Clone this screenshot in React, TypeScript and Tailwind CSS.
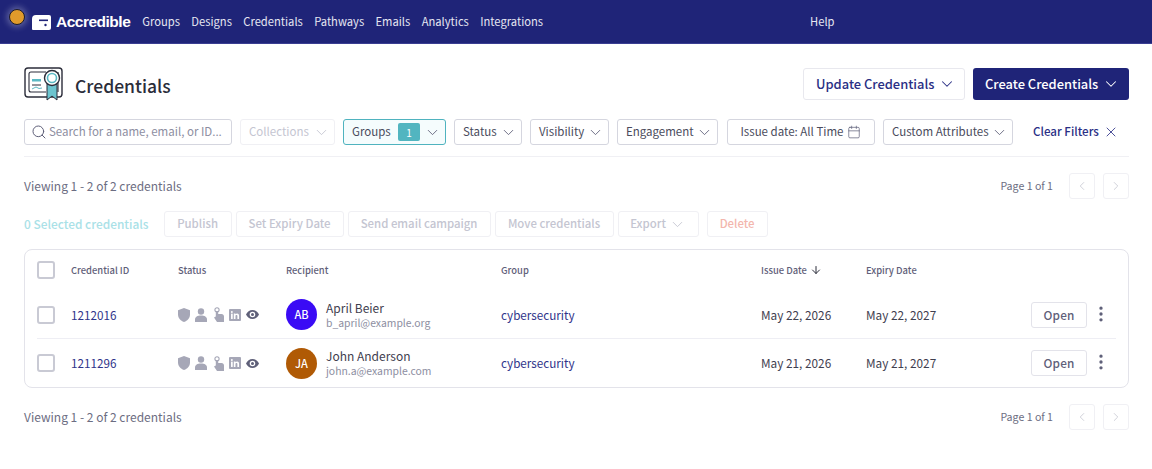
import React from "react";
import { ChevronDown, ChevronLeft, ChevronRight, Search, Calendar, X, ArrowDown, EllipsisVertical } from "lucide-react";

const font = "font-['Noto_Sans_CJK_SC','Noto_Sans',sans-serif]";

function Logo() {
  return (
    <svg width="19" height="15" viewBox="0 0 19 15" className="mt-[1px] shrink-0">
      <path d="M4 0H17a2 2 0 0 1 2 2v11a2 2 0 0 1-2 2H1a1 1 0 0 1-1-1V4a4 4 0 0 1 4-4z" fill="#fff" />
      <rect x="7" y="4.500" width="9" height="1.600" fill="#1f2478" />
      <circle cx="13.500" cy="10" r="1.200" fill="#1f2478" />
    </svg>
  );
}

function CertIcon() {
  return (
    <svg width="40" height="34" viewBox="0 0 40 34" fill="none" className="shrink-0">
      <rect x="1" y="1" width="37" height="29" rx="3" stroke="#2b2d3a" strokeWidth="1.400" />
      <path d="M22 5H7a2 2 0 0 0-2 2v16a2 2 0 0 0 2 2h15M34 5v20" stroke="#2b2d3a" strokeWidth="1.100" />
      <rect x="8" y="12" width="9" height="2.500" fill="#5ab9c4" />
      <path d="M8 18h9" stroke="#2b2d3a" strokeWidth="1" />
      <path d="M8 22l4-2 3 1.500 3-.5" stroke="#5ab9c4" strokeWidth="1" />
      <path d="M23 17v16l5-4 5 4V17z" fill="#6cc4cf" stroke="#2b2d3a" strokeWidth="1" />
      <circle cx="28" cy="11" r="7.500" fill="#fff" stroke="#2b2d3a" strokeWidth="1.400" />
      <circle cx="28" cy="11" r="4.500" fill="#fff" stroke="#5ab9c4" strokeWidth="1.600" />
    </svg>
  );
}

function StatusIcons() {
  const c = "#a6a7b7";
  return (
    <div className="flex w-[108px] items-center gap-[5px]">
      <svg width="12" height="14" viewBox="0 0 12 14" fill={c}><path d="M6 0 12 2.200v4.300c0 3.400-2.400 6.200-6 7.500C2.400 12.700 0 9.900 0 6.500V2.200z" /></svg>
      <svg width="12" height="14" viewBox="0 0 12 14" fill={c}><circle cx="6" cy="3.500" r="3.200" /><path d="M0 14v-2.500C0 9 2.400 7.500 6 7.500S12 9 12 11.500V14z" /></svg>
      <svg width="12" height="15" viewBox="0 0 12 15" fill={c}><circle cx="5" cy="2.800" r="2.100" fill="none" stroke={c} strokeWidth="1.100" /><path d="M3.800 4h2.400v3h3.300c1.500 0 2.500 1 2.500 2.500V15H5L2 10.500l1.800-1z" /></svg>
      <svg width="12" height="12" viewBox="0 0 13 13"><rect width="13" height="13" rx="1" fill={c} /><rect x="2.200" y="5" width="1.800" height="5.800" fill="#fff" /><circle cx="3.100" cy="3.200" r="1.050" fill="#fff" /><path d="M5.200 5H7v.8c.4-.6 1-1 1.800-1 1.500 0 2.100 1 2.100 2.500v3.500H9.100V7.700c0-.8-.3-1.300-1-1.300S7 7 7 7.700v3.100H5.200z" fill="#fff" /></svg>
      <svg width="13" height="9" viewBox="0 0 13 9" fill="#5f6079"><path d="M6.500 0C3.600 0 1.200 1.800 0 4.500 1.200 7.200 3.600 9 6.500 9S11.800 7.200 13 4.500C11.800 1.800 9.400 0 6.500 0zm0 7.300a2.800 2.800 0 1 1 0-5.600 2.800 2.800 0 0 1 0 5.600z" /><circle cx="6.500" cy="4.500" r="1.500" /></svg>
    </div>
  );
}

function Filter({ label, className = "" }: { label: string; className?: string }) {
  return (
    <div className={`flex h-[26px] items-center justify-between whitespace-nowrap rounded-[3px] border border-[#d5d6df] bg-white pl-2 pr-1 text-[11.500px] text-[#4a4b5c] ${className}`}>
      <span>{label}</span>
      <ChevronDown size={17} strokeWidth={1.250} className="shrink-0 text-[#5f6079]" />
    </div>
  );
}

function Bulk({ label, className = "" }: { label: string; className?: string }) {
  return (
    <div className={`flex h-[26px] items-center justify-center whitespace-nowrap rounded-[3px] border border-[#f0f0f4] text-[11.400px] font-medium text-[#c4c5d1] ${className}`}>
      {label}
    </div>
  );
}

function Pager({ className = "" }: { className?: string }) {
  return (
    <div className={`flex items-center justify-between ${className}`}>
      <span className="text-[12px] text-[#6c6d82]">Viewing 1 - 2 of 2 credentials</span>
      <div className="flex items-center">
        <span className="mr-4 text-[10.600px] text-[#6c6d82]">Page 1 of 1</span>
        <div className="mr-[8px] flex h-[26px] w-[26px] items-center justify-center rounded-[3px] border border-[#f0f0f4] text-[#c9cad4]"><ChevronLeft size={14} strokeWidth={1.500} /></div>
        <div className="flex h-[26px] w-[26px] items-center justify-center rounded-[3px] border border-[#f0f0f4] text-[#c9cad4]"><ChevronRight size={14} strokeWidth={1.500} /></div>
      </div>
    </div>
  );
}

function Row({ id, initials, color, name, email, date, exp, last }: { id: string; initials: string; color: string; name: string; email: string; date: string; exp: string; last?: boolean }) {
  return (
    <div className={`mx-3 flex h-[48px] items-center ${last ? "" : "border-b border-[#eeeef4]"}`}>
      <div className="h-[18px] w-[18px] shrink-0 rounded-[3px] border-2 border-[#c9cad4] bg-white" />
      <div className="ml-4 w-[107px] text-[11.700px] text-[#2f348a]">{id}</div>
      <StatusIcons />
      <div className="flex w-[215px] items-center">
        <div className="flex h-[31px] w-[31px] items-center justify-center rounded-full text-[11px] font-medium text-white" style={{ backgroundColor: color }}>{initials}</div>
        <div className="ml-[9px] flex flex-col">
          <span className="text-[12px] leading-[16px] text-[#3f404f]">{name}</span>
          <span className="text-[10.400px] leading-[14px] text-[#8d8ea1]">{email}</span>
        </div>
      </div>
      <div className="w-[260px] text-[11.700px] text-[#2f348a]">cybersecurity</div>
      <div className="w-[105px] text-[11.800px] text-[#3f404f]">{date}</div>
      <div className="w-[165px] text-[11.800px] text-[#3f404f]">{exp}</div>
      <div className="flex h-[26px] w-[56px] items-center justify-center rounded-[3px] border border-[#e3e3ea] text-[11.800px] font-medium tracking-[0.2px] text-[#5f6079]">Open</div>
      <EllipsisVertical size={20} strokeWidth={2} className="ml-[4px] mt-[-2px] text-[#5f6079]" />
    </div>
  );
}

export default function App() {
  return (
    <div className={`relative h-[469px] w-[1152px] overflow-hidden bg-white ${font}`}>
      <div className="absolute left-[9px] top-[9px] h-[16px] w-[16px] rounded-full border border-[#1a1a2a] bg-[#e09a2b] shadow-[0_0_6px_2px_rgba(255,255,255,0.3)]" />
      <header className="flex h-[44px] items-center border-b border-[#3a3e92] bg-[#1f2478] pl-[32px] text-[11.200px] text-[#e6e7f2]">
        <Logo />
        <span className="ml-[5px] mr-[12px] mt-[1px] font-['Liberation_Sans',sans-serif] text-[15.500px] font-bold tracking-[-0.5px] text-white">Accredible</span>
        <nav className="flex gap-[11.400px]">
          <span>Groups</span><span>Designs</span><span>Credentials</span><span>Pathways</span><span>Emails</span><span>Analytics</span><span>Integrations</span>
        </nav>
        <span className="ml-[267px]">Help</span>
      </header>

      <main className="pl-6 pr-[23px]">
        <div className="mt-6 flex h-[32px] items-center">
          <CertIcon />
          <h1 className="ml-[11px] mt-[4px] text-[17.500px] font-medium text-[#2b2d3a]">Credentials</h1>
          <div className="ml-auto flex gap-2">
            <div className="flex h-[32px] w-[162px] items-center gap-[4px] whitespace-nowrap rounded-[3px] border border-[#e8e8ee] pl-3 text-[12.900px] font-medium text-[#2a2f85]">Update Credentials<ChevronDown size={18} strokeWidth={1.400} /></div>
            <div className="flex h-[32px] w-[156px] items-center gap-[4px] whitespace-nowrap rounded-[3px] bg-[#1f2478] pl-3 text-[12.900px] font-medium text-white">Create Credentials<ChevronDown size={18} strokeWidth={1.400} /></div>
          </div>
        </div>

        <div className="mt-[19px] flex items-center border-b border-[#f0f0f4] pb-[11px]">
          <div className="flex h-[26px] w-[208px] items-center whitespace-nowrap rounded-[3px] border border-[#d5d6df] pl-[6px] text-[11.500px] text-[#8d8ea1]">
            <Search size={16} strokeWidth={1.500} className="mr-[2px] shrink-0 text-[#5f6079]" />Search for a name, email, or ID...
          </div>
          <div className="ml-2 flex h-[26px] w-[95px] items-center justify-between whitespace-nowrap rounded-[3px] border border-[#f0f0f4] pl-2 pr-1 text-[11.500px] text-[#c4c5d1]">Collections<ChevronDown size={17} strokeWidth={1.250} className="shrink-0" /></div>
          <div className="ml-2 flex h-[26px] w-[103px] items-center whitespace-nowrap rounded-[3px] border border-[#4fb3bf] bg-[#f5fcfd] pl-2 pr-1 text-[11.500px] text-[#4a4b5c]">
            Groups
            <span className="ml-auto flex h-[18px] w-[22px] items-center justify-center rounded-[2px] bg-[#52b5c0] text-[10px] text-white">1</span>
            <ChevronDown size={17} strokeWidth={1.250} className="ml-[4px] shrink-0 text-[#5f6079]" />
          </div>
          <Filter label="Status" className="ml-2 w-[68px]" />
          <Filter label="Visibility" className="ml-2 w-[79px]" />
          <Filter label="Engagement" className="ml-2 w-[101px]" />
          <div className="ml-[9px] flex h-[26px] w-[148px] items-center justify-center gap-[4px] whitespace-nowrap rounded-[3px] border border-[#d5d6df] text-[11.500px] text-[#4a4b5c]">Issue date: All Time<Calendar size={14} strokeWidth={1.250} className="shrink-0 text-[#5f6079]" /></div>
          <Filter label="Custom Attributes" className="ml-2 w-[130px]" />
          <div className="ml-[20px] flex items-center gap-[4px] whitespace-nowrap text-[11.600px] font-medium text-[#2a2f85]">Clear Filters<X size={16} strokeWidth={1.250} /></div>
        </div>

        <Pager className="mt-[16px]" />

        <div className="mt-[12px] flex items-center gap-1">
          <span className="mr-[11px] whitespace-nowrap text-[11.900px] font-medium text-[#a9e1e7]">0 Selected credentials</span>
          <Bulk label="Publish" className="w-[68px]" />
          <Bulk label="Set Expiry Date" className="w-[108px]" />
          <Bulk label="Send email campaign" className="w-[143px]" />
          <Bulk label="Move credentials" className="w-[119px]" />
          <div className="flex h-[26px] w-[81px] items-center justify-center gap-[3px] whitespace-nowrap rounded-[3px] border border-[#f0f0f4] text-[11.400px] font-medium text-[#c4c5d1]">Export<ChevronDown size={17} strokeWidth={1.250} /></div>
          <Bulk label="Delete" className="ml-1 w-[61px] !text-[#f3b6ad]" />
        </div>

        <div className="mt-[12px] rounded-[8px] border border-[#e3e3ea]">
          <div className="mx-3 flex h-[41px] items-center pb-px text-[9.400px] font-medium text-[#5f6079]">
            <div className="h-[18px] w-[18px] shrink-0 rounded-[3px] border-2 border-[#c9cad4]" />
            <div className="ml-4 w-[107px]">Credential ID</div>
            <div className="w-[108px]">Status</div>
            <div className="w-[215px]">Recipient</div>
            <div className="w-[260px]">Group</div>
            <div className="flex w-[105px] items-center gap-[3px]">Issue Date<ArrowDown size={12} className="text-[#2b2d3a]" /></div>
            <div>Expiry Date</div>
          </div>
          <Row id="1212016" initials="AB" color="#3a0bf5" name="April Beier" email="b_april@example.org" date="May 22, 2026" exp="May 22, 2027" />
          <Row id="1211296" initials="JA" color="#b05a05" name="John Anderson" email="john.a@example.com" date="May 21, 2026" exp="May 21, 2027" last />
        </div>

        <Pager className="mt-[16px]" />
      </main>
    </div>
  );
}
